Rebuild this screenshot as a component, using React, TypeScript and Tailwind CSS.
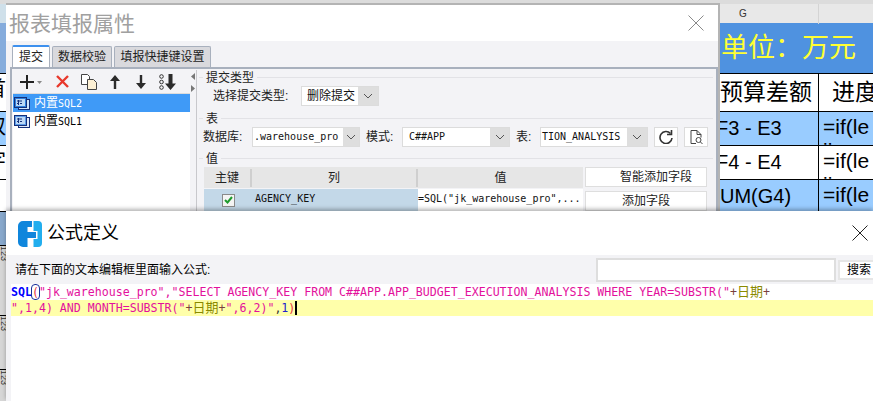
const SANS = 'font-["Liberation_Sans","Noto_Sans_CJK_SC",sans-serif]'
const MONO = 'font-["DejaVu_Sans_Mono","Noto_Sans_CJK_SC",monospace]'

function ChevronDown() {
  return (
    <svg width="10" height="6" viewBox="0 0 10 6" fill="none" stroke="#555" strokeWidth="1">
      <path d="M1 1l4 4 4-4" />
    </svg>
  )
}

function ListIcon({ selected }: { selected?: boolean }) {
  return (
    <svg width="16" height="13" viewBox="0 0 16 13" className="shrink-0">
      <rect x="4.5" y="2.5" width="11" height="10" fill={selected ? '#cfe4fb' : '#dfeafa'} stroke="#14307a" />
      <rect x="0.5" y="0.5" width="12" height="10" fill={selected ? '#2f7fdc' : '#5a9be8'} stroke="#14307a" />
      <rect x="2" y="2" width="9" height="7" fill="#bcd8f5" />
      <path d="M3 4h5M3 6.500h2M6 6.500h2M4.500 3v5" stroke="#14307a" strokeWidth="1" />
    </svg>
  )
}

function Toolbar() {
  return (
    <div className="flex h-[23px] items-center pl-[7px]">
      <svg width="14" height="14" viewBox="0 0 14 14" className="shrink-0">
        <path d="M7 0v14M0 7h14" stroke="#222" strokeWidth="2" />
      </svg>
      <svg width="5" height="3" viewBox="0 0 5 3" className="ml-[3px] mt-[1px] shrink-0">
        <path d="M0 0h5L2.500 3z" fill="#888" />
      </svg>
      <svg width="13" height="13" viewBox="0 0 13 13" className="ml-[14px] shrink-0">
        <path d="M1 1l11 11M12 1L1 12" stroke="#e8382c" strokeWidth="2.400" />
      </svg>
      <svg width="16" height="16" viewBox="0 0 16 16" className="ml-[12px] shrink-0">
        <path d="M.5.500h6l2 2v8h-8z" fill="#fff" stroke="#444" />
        <path d="M6.500 5.500h6l3 3v7h-9z" fill="#fdf0d4" stroke="#444" />
      </svg>
      <svg width="10" height="14" viewBox="0 0 10 14" className="ml-[13px] shrink-0">
        <path d="M5 0l5 6H6.200v8H3.800V6H0z" fill="#2b2b2b" />
      </svg>
      <svg width="10" height="14" viewBox="0 0 10 14" className="ml-[16px] shrink-0">
        <path d="M5 14L0 8h3.800V0h2.400v8H10z" fill="#2b2b2b" />
      </svg>
      <svg width="17" height="16" viewBox="0 0 17 16" className="ml-[13px] shrink-0">
        <circle cx="2.500" cy="2.500" r="1.800" fill="none" stroke="#333" />
        <circle cx="2.500" cy="8" r="1.800" fill="none" stroke="#333" />
        <circle cx="2.500" cy="13.500" r="1.800" fill="none" stroke="#333" />
        <path d="M11.500 16L6 9.500h3.500V0h4v9.500H17z" fill="#2b2b2b" />
      </svg>
    </div>
  )
}

function GroupTitle({ label }: { label: string }) {
  return (
    <div className="flex h-[15px] items-center text-[12px] leading-none text-[#222]">
      <div className="h-px w-[4px] bg-[#e2e2e6]" />
      <span className="px-[3px]">{label}</span>
      <div className="h-px flex-1 bg-[#e2e2e6]" />
    </div>
  )
}

function Select({ value, width, arrow, mono, inset }: { value: string; width: string; arrow: string; mono?: boolean; inset?: boolean }) {
  return (
    <div className={`flex h-[20px] shrink-0 border border-[#dcdcdc] bg-white ${width}`}>
      <div className={`flex-1 overflow-hidden whitespace-nowrap leading-[18px] ${mono ? `${MONO} text-[10px] ${inset ? 'pl-[6px]' : 'pl-[1px]'}` : 'pl-[5px] text-[12px]'} text-[#111]`}>
        {value}
      </div>
      <div className={`flex items-center justify-center bg-[#dedede] ${arrow}`}>
        <ChevronDown />
      </div>
    </div>
  )
}

function PropertiesDialog() {
  return (
    <div className="absolute left-[6px] top-[3px] flex h-[212px] w-[714px] flex-col border-2 border-b-0 border-l-0 border-[#b4b4b4] bg-[#f3f3f6]">
      <div className="flex h-[36px] shrink-0 items-center justify-between bg-white pl-[3px] pr-[14px]">
        <span className="text-[21px] leading-none text-[#a0a0a0]">报表填报属性</span>
        <svg width="16" height="16" viewBox="0 0 16 16" fill="none" stroke="#8a8a8a" strokeWidth="1">
          <path d="M.5.500l15 15M15.500.500l-15 15" />
        </svg>
      </div>

      <div className="flex h-[26px] shrink-0 items-end gap-[2px] pl-[6px] text-[12px] text-[#222]">
        <div className="flex h-[22px] w-[38px] items-center justify-center rounded-t-[2px] border-x border-t-2 border-x-[#a8b0bd] border-t-[#3d90ee] bg-white">提交</div>
        <div className="flex h-[21px] w-[60px] items-center justify-center rounded-t-[2px] border border-b-0 border-[#a8b0bd] bg-[#d9d9dd]">数据校验</div>
        <div className="flex h-[21px] w-[97px] items-center justify-center rounded-t-[2px] border border-b-0 border-[#a8b0bd] bg-[#d9d9dd]">填报快捷键设置</div>
      </div>

      <div className="ml-[4px] flex min-h-0 flex-1 border-2 border-b-0 border-[#a8b0bd] bg-[#f3f3f6] pt-[1px]">
        <div className="flex w-[178px] shrink-0 flex-col pl-[1px]">
          <Toolbar />
          <div className="flex-1 border-t border-[#dcdcdc] bg-white text-[12px]">
            <div className="flex h-[18px] items-center gap-[4px] bg-[#3f9af7] pl-[1px] text-white">
              <ListIcon selected />
              <span className="leading-none">内置<span className={`${MONO} text-[10px]`}>SQL2</span></span>
            </div>
            <div className="flex h-[18px] items-center gap-[4px] pl-[1px] text-black">
              <ListIcon />
              <span className="leading-none">内置<span className={`${MONO} text-[10px]`}>SQL1</span></span>
            </div>
          </div>
        </div>

        <div className="flex w-[7px] shrink-0 flex-col items-center gap-[5px] border-r border-[#c8c8cc] pt-[3px]">
          <svg width="4" height="7" viewBox="0 0 4 7"><path d="M4 0v7L0 3.500z" fill="#777" /></svg>
          <svg width="4" height="7" viewBox="0 0 4 7"><path d="M0 0v7l4-3.500z" fill="#777" /></svg>
        </div>

        <div className="flex min-w-0 flex-1 flex-col pl-[2px] pr-[3px] text-[12px] text-[#222]">
          <GroupTitle label="提交类型" />
          <div className="flex h-[21px] items-center pl-[14px] pt-[1px]">
            <span className="w-[88px] whitespace-nowrap">选择提交类型:</span>
            <Select value="删除提交" width="w-[78px]" arrow="w-[20px]" />
          </div>
          <div className="mt-[5px]"><GroupTitle label="表" /></div>
          <div className="mt-[1px] flex h-[20px] items-center pl-[4px]">
            <span className="w-[49px] whitespace-nowrap">数据库:</span>
            <Select value=".warehouse_pro" width="w-[108px]" arrow="w-[16px]" mono />
            <span className="ml-[6px] w-[36px] whitespace-nowrap">模式:</span>
            <Select value="C##APP" width="w-[108px]" arrow="w-[19px]" mono inset />
            <span className="ml-[6px] w-[24px] whitespace-nowrap">表:</span>
            <Select value="TION_ANALYSIS" width="w-[108px]" arrow="w-[20px]" mono />
            <div className="ml-[6px] flex h-[20px] w-[24px] items-center justify-center border border-[#dcdcdc] bg-white">
              <svg width="14" height="14" viewBox="0 0 14 14" fill="none" stroke="#333" strokeWidth="1.600">
                <path d="M11.500 3.500A6 6 0 1 0 13 8" />
                <path d="M12.500 0v4.500H8" />
              </svg>
            </div>
            <div className="ml-[6px] flex h-[20px] w-[24px] items-center justify-center border border-[#dcdcdc] bg-white">
              <svg width="13" height="14" viewBox="0 0 13 14" fill="none" stroke="#444" strokeWidth="1">
                <path d="M1 .500h6l4 4v3M1 .500v13h5M7 .500v4h4" />
                <circle cx="8.500" cy="10" r="2.500" />
                <path d="M10.500 12l2 2" />
              </svg>
            </div>
          </div>
          <div className="mt-[4px]"><GroupTitle label="值" /></div>
          <div className="mt-[1px] flex items-start pl-[5px]">
            <div className="w-[379px] shrink-0">
              <div className="flex h-[21px] items-center bg-[#e6e6e6] text-center">
                <div className="w-[48px] border-r-2 border-[#cfcfcf]">主键</div>
                <div className="w-[166px] border-r-2 border-[#cfcfcf]">列</div>
                <div className="flex-1">值</div>
              </div>
              <div className="mt-[1px] flex h-[22px]">
                <div className="flex w-[48px] items-center justify-center bg-[#c3d8e8]">
                  <div className="flex h-[13px] w-[13px] items-center justify-center border border-[#8a8a8a] bg-[#f4f4f4]">
                    <svg width="9" height="8" viewBox="0 0 9 8" fill="none" stroke="#1e9a2e" strokeWidth="2">
                      <path d="M1 4l2.500 2.500L8 1" />
                    </svg>
                  </div>
                </div>
                <div className={`w-[166px] bg-[#c3d8e8] pl-[3px] pt-[3px] text-[10px] leading-[14px] text-[#111] ${MONO}`}>AGENCY_KEY</div>
                <div className={`flex-1 overflow-hidden whitespace-nowrap bg-white pt-[3px] text-[10px] leading-[14px] text-[#111] ${MONO}`}>=SQL("jk_warehouse_pro",...</div>
              </div>
            </div>
            <div className="ml-[2px] w-[122px] shrink-0">
              <div className="flex h-[20px] items-center justify-end border border-[#dedede] bg-white pr-[14px]">智能添加字段</div>
              <div className="mt-[4px] flex h-[20px] items-center justify-center border border-[#dedede] bg-white">添加字段</div>
            </div>
          </div>
        </div>
      </div>
    </div>
  )
}

function FormulaDialog() {
  const magenta = 'text-[#e3109c]'
  const op = 'text-[#7a3f3f]'
  const olive = 'text-[13px] text-[#8a8a00]'
  return (
    <div className="absolute bottom-0 left-[6px] right-0 top-[211px] flex flex-col bg-white shadow-[0_-2px_4px_rgba(0,0,0,0.3)]">
      <div className="flex h-[44px] shrink-0 items-center justify-between pl-[12px] pr-[5px]">
        <div className="flex items-center gap-[5px]">
          <svg width="24" height="26" viewBox="0 0 24 26" className="mt-[2px]">
            <path d="M5 0h9v6H9.500v5H18v6H9.500v9H5a5 5 0 0 1-5-5V5a5 5 0 0 1 5-5z" fill="#0f86dc" />
            <path d="M15.500 0H20a4 4 0 0 1 4 4v18a4 4 0 0 1-4 4h-4.500v-8h4V10h-4z" fill="#22aeee" />
          </svg>
          <span className="text-[18px] leading-none text-black">公式定义</span>
        </div>
        <svg width="16" height="16" viewBox="0 0 16 16" fill="none" stroke="#222" strokeWidth="1">
          <path d="M.5.500l15 15M15.500.500l-15 15" />
        </svg>
      </div>
      <div className="flex h-[29px] shrink-0 items-center justify-between bg-[#f3f3f6] pl-[9px] text-[12px] text-black">
        <span>请在下面的文本编辑框里面输入公式:</span>
        <div className="flex items-center gap-[2px]">
          <div className="h-[24px] w-[240px] border-2 border-[#dedede] bg-white" />
          <div className="flex h-[20px] w-[35px] items-center justify-end border-2 border-r-0 border-[#e6e6e6] bg-white pr-[2px]">搜索</div>
        </div>
      </div>
      <div className="flex min-h-0 flex-1 bg-[#f3f3f6] pl-[5px]">
        <div className={`flex-1 whitespace-pre bg-white text-[11.6px] leading-[16px] ${MONO} ${magenta}`}>
          <div className="h-[16px]">
            <span className="font-bold text-[#0000ff]">SQL</span>
            <span className="rounded-[3px] text-[#e8343c] outline outline-1 outline-[#1a2f9a]">(</span>
            {'"jk_warehouse_pro","SELECT AGENCY_KEY FROM C##APP.APP_BUDGET_EXECUTION_ANALYSIS WHERE YEAR=SUBSTR("'}
            <span className={op}>+</span>
            <span className={olive}>日期</span>
            <span className={op}>+</span>
          </div>
          <div className="h-[16px] bg-[#ffffaa]">
            {'",1,4) AND MONTH=SUBSTR("'}
            <span className={op}>+</span>
            <span className={olive}>日期</span>
            <span className={op}>+</span>
            {'",6,2)"'}
            <span className="text-[#333]">,</span>
            <span className="text-[#2222cc]">1</span>
            <span className="border-r-2 border-black text-[#e8343c]">)</span>
          </div>
        </div>
      </div>
    </div>
  )
}

const ROWS = [
  { h: 'h-[38px]', edge: 'bg-white', bg: 'bg-white', left: '首', g: '', hdr: true },
  { h: 'h-[34px]', edge: 'bg-[#99ccff]', bg: 'bg-[#99ccff]', left: '収', g: '=F3 - E3' },
  { h: 'h-[34px]', edge: 'bg-white', bg: 'bg-white', left: '字', g: '=F4 - E4' },
  { h: 'h-[32px]', edge: 'bg-white', bg: 'bg-[#99ccff]', left: '', g: '=SUM(G4)' },
]

function Sheet() {
  return (
    <div className={`w-[873px] ${SANS}`}>
      <div className="h-[4px] bg-[#dcdcdc]" />
      <div className="grid h-[19px] grid-cols-[668px_151px_54px] bg-[#e8e8e8] text-[10px] text-[#333]">
        <div className="bg-[#cfe0ea]" />
        <div className="border-r border-[#d4d4d4] text-center leading-[20px]">G</div>
        <div />
      </div>
      <div className="flex h-[51px] border-b border-black bg-[#4f92e0]">
        <div className="w-[6px] bg-[#85acdc]" />
        <div className="pl-[715px] text-[27px] leading-[50px] text-[#ffff33]">单位：万元</div>
      </div>
      {ROWS.map((r, i) => (
        <div key={i} className={`grid grid-cols-[668px_151px_54px] overflow-hidden border-b border-black ${r.h}`}>
          <div className={`overflow-hidden text-[20px] ${r.edge}`}>
            <span className="-ml-[14px] block leading-[30px] text-black">{r.left}</span>
          </div>
          {r.hdr ? (
            <div className={`border-r border-black pr-[6px] text-right text-[23px] leading-[36px] ${r.bg}`}>预算差额</div>
          ) : (
            <div className={`border-r border-black text-center text-[20px] leading-[32px] text-black ${r.bg}`}>{r.g}</div>
          )}
          {r.hdr ? (
            <div className={`whitespace-nowrap pl-[13px] text-[23px] leading-[36px] ${r.bg}`}>进度</div>
          ) : (
            <div className={`overflow-hidden pl-[4px] pt-[3px] text-[21px] leading-[24px] text-black ${r.bg}`}>
              =if(le
              <br />
              ii
            </div>
          )}
        </div>
      ))}
      <div className="flex h-[190px] w-[6px] flex-col overflow-hidden bg-[#d6d6d6] text-[9px] text-[#333]">
        <div className="h-[34px] shrink-0 border-b border-black bg-[#88a8cc]" />
        <div className="flex h-[70px] shrink-0 items-center border-b border-black [writing-mode:vertical-rl]">123</div>
        <div className="flex h-[54px] shrink-0 items-center border-b border-black [writing-mode:vertical-rl]">123</div>
        <div className="flex h-[32px] shrink-0 items-center [writing-mode:vertical-rl]">123</div>
      </div>
    </div>
  )
}

export default function App() {
  return (
    <div className={`relative h-[401px] w-[873px] overflow-hidden bg-white ${SANS}`}>
      <Sheet />
      <PropertiesDialog />
      <FormulaDialog />
    </div>
  )
}
